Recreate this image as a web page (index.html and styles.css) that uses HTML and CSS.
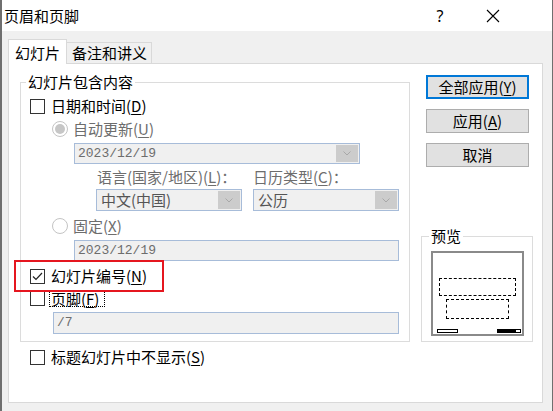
FILE: index.html
```html
<!DOCTYPE html>
<html lang="zh-CN">
<head>
<meta charset="UTF-8">
<title>页眉和页脚</title>
<link rel="stylesheet" href="styles.css">
</head>
<body>
<div class="window">
  <div class="titlebar">
    <span class="title">页眉和页脚</span>
    <span class="help">?</span>
    <span class="close">
      <svg width="14" height="14" viewBox="0 0 14 14"><path d="M1 1 L13 13 M13 1 L1 13" stroke="#000" stroke-width="1.1" fill="none"/></svg>
    </span>
  </div>
  <div class="body">
    <div class="tabs">
      <div class="tab active">幻灯片</div>
      <div class="tab">备注和讲义</div>
    </div>
    <div class="panel">
      <div class="main-col">
        <fieldset class="group">
          <legend>幻灯片包含内容</legend>
          <div class="row r1"><span class="check"></span><span>日期和时间(<u>D</u>)</span></div>
          <div class="row r2 off"><span class="radio on"></span><span>自动更新(<u>U</u>)</span></div>
          <div class="field combo date-combo"><span class="val">2023/12/19</span><span class="drop"><svg width="8" height="5" viewBox="0 0 8 5"><path d="M0.5 0.5 L4 4 L7.5 0.5" stroke="#a8a8a8" fill="none"/></svg></span></div>
          <div class="row labels off"><span class="lab1">语言(国家/地区)(<u>L</u>)：</span><span>日历类型(<u>C</u>)：</span></div>
          <div class="combos">
            <div class="field combo small"><span class="val cjk">中文(中国)</span><span class="drop"><svg width="8" height="5" viewBox="0 0 8 5"><path d="M0.5 0.5 L4 4 L7.5 0.5" stroke="#a8a8a8" fill="none"/></svg></span></div>
            <div class="field combo small"><span class="val cjk">公历</span><span class="drop"><svg width="8" height="5" viewBox="0 0 8 5"><path d="M0.5 0.5 L4 4 L7.5 0.5" stroke="#a8a8a8" fill="none"/></svg></span></div>
          </div>
          <div class="row r3 off"><span class="radio"></span><span>固定(<u>X</u>)</span></div>
          <div class="field date-fixed"><span class="val">2023/12/19</span></div>
          <div class="row r4 marked"><span class="check checked"><svg width="11" height="9" viewBox="0 0 11 9"><path d="M1 4.5 L4 7.5 L10 1" stroke="#222" stroke-width="1.2" fill="none"/></svg></span><span>幻灯片编号(<u>N</u>)</span></div>
          <div class="row r5"><span class="check"></span><span class="focus">页脚(<u>F</u>)</span></div>
          <div class="field footer-field"><span class="val">/7</span></div>
        </fieldset>
        <div class="row r6"><span class="check"></span><span>标题幻灯片中不显示(<u>S</u>)</span></div>
      </div>
      <div class="side-col">
        <button class="btn default">全部应用(<u>Y</u>)</button>
        <button class="btn">应用(<u>A</u>)</button>
        <button class="btn">取消</button>
        <fieldset class="preview-group">
          <legend>预览</legend>
          <div class="preview">
            <div class="dash d1"></div>
            <div class="dash d2"></div>
            <div class="bars"><span class="bar-l"></span><span class="bar-r"></span></div>
          </div>
        </fieldset>
      </div>
    </div>
  </div>
</div>
</body>
</html>
```

FILE: styles.css
```css
body {
  margin: 0;
  font-family: "Noto Sans CJK SC", sans-serif;
  font-size: 15px;
  line-height: 18px;
  color: #000;
  background: #f0f0f0;
}

.window {
  width: 553px;
  height: 411px;
  box-sizing: border-box;
  border-left: 2px solid #6f6f6f;
  border-right: 1px solid #6f6f6f;
  background: #f0f0f0;
  overflow: hidden;
}

.titlebar {
  height: 31px;
  background: #fff;
  display: flex;
  align-items: center;
  padding: 0 36px 0 2px;
}

.title {
  flex: 1;
  font-size: 15px;
  padding-top: 1px;
}

.help {
  width: 46px;
  text-align: center;
  font-family: "Noto Sans", sans-serif;
  font-size: 16px;
  margin-right: 7px;
}

.close {
  width: 46px;
  display: flex;
  justify-content: center;
}

.body {
  padding: 9px 9px 0 6px;
}

.tabs {
  display: flex;
  align-items: flex-end;
  height: 23px;
}

.tab {
  height: 20px;
  line-height: 20px;
  padding: 0 4px 0 5px;
  border: 1px solid #d9d9d9;
  border-left: none;
  border-bottom: none;
  background: #f0f0f0;
}

.tab.active {
  height: 24px;
  line-height: 26px;
  padding: 0 6px;
  border-left: 1px solid #d9d9d9;
  background: #fff;
  margin-bottom: -1px;
  position: relative;
  z-index: 1;
}

.panel {
  height: 340px;
  box-sizing: border-box;
  border: 1px solid #d9d9d9;
  background: #fff;
  display: flex;
}

.main-col {
  padding-left: 11px;
  width: 390px;
}

fieldset {
  margin: 0;
  min-width: 0;
  border: 1px solid #dcdcdc;
  box-sizing: border-box;
}

legend {
  padding: 0 2px;
  line-height: 18px;
}

.group {
  margin-top: 9px;
  width: 390px;
  padding: 0 0 7px 9px;
}

.group legend {
  margin-left: -4px;
}

.row {
  display: flex;
  align-items: center;
  height: 18px;
  white-space: nowrap;
}

.off {
  color: #6d6d6d;
}

u {
  text-decoration-thickness: 1px;
  text-underline-offset: 2px;
}

.check {
  width: 15px;
  height: 15px;
  box-sizing: border-box;
  border: 1px solid #333;
  background: #fff;
  margin-right: 6px;
  display: flex;
  align-items: center;
  justify-content: center;
}

.radio {
  width: 16px;
  height: 16px;
  box-sizing: border-box;
  border: 1px solid #c4c4c4;
  border-radius: 50%;
  background: #fff;
  margin-right: 5px;
  display: flex;
  align-items: center;
  justify-content: center;
}

.radio.on::before {
  content: "";
  width: 10px;
  height: 10px;
  border-radius: 50%;
  background: #c6c6c6;
}

.r1 { margin-top: 6px; }
.r2 { margin-top: 5px; margin-left: 22px; }
.r3 { margin-top: 6px; margin-left: 22px; }
.r4 { margin-top: 6px; position: relative; }
.r5 { margin-top: 4px; }
.r6 { margin-top: 6px; margin-left: 10px; }

.marked::after {
  content: "";
  position: absolute;
  left: -16px;
  top: -7px;
  width: 150px;
  height: 32px;
  box-sizing: border-box;
  border: 2px solid #e5161f;
}

.focus {
  outline: 1px dotted #000;
  outline-offset: 0;
  margin-left: -1px;
  padding: 0 5px 0 1px;
  line-height: 15px;
}

.field {
  box-sizing: border-box;
  border: 1px solid #a7bcd9;
  background: #f0f0f0;
  color: #6d6d6d;
  display: flex;
  align-items: center;
  font-family: "Liberation Mono", monospace;
  font-size: 13px;
}

.val {
  flex: 1;
  padding-left: 3px;
}

.val.cjk {
  font-family: "Noto Sans CJK SC", sans-serif;
  font-size: 15px;
  color: #555;
  padding-left: 4px;
}

.drop {
  width: 22px;
  align-self: stretch;
  margin: 1px;
  background: #cccccc;
  display: flex;
  align-items: center;
  justify-content: center;
}

.date-combo {
  margin: 5px 0 0 44px;
  width: 286px;
  height: 21px;
}

.labels {
  margin: 4px 0 0 67px;
}

.lab1 {
  width: 156px;
}

.combos {
  display: flex;
  gap: 11px;
  margin: 3px 0 0 66px;
}

.field.small {
  width: 146px;
  height: 22px;
}

.date-fixed {
  margin: 5px 0 0 44px;
  width: 325px;
  height: 21px;
}

.footer-field {
  margin: 5px 0 0 23px;
  width: 346px;
  height: 22px;
}

.side-col {
  margin-left: 11px;
  width: 112px;
  display: flex;
  flex-direction: column;
}

.btn {
  font-family: "Noto Sans CJK SC", sans-serif;
  font-size: 15px;
  line-height: 18px;
  color: #000;
  width: 103px;
  height: 24px;
  margin: 10px 0 0 5px;
  padding: 0;
  box-sizing: border-box;
  border: 1px solid #adadad;
  background: #e1e1e1;
}

.btn.default {
  margin-top: 11px;
  border: 2px solid #0078d7;
}

.preview-group {
  margin-top: 60px;
  width: 112px;
  padding: 0 0 5px 9px;
}

.preview-group legend {
  margin-left: -2px;
}

.preview {
  margin-top: 6px;
  width: 93px;
  height: 85px;
  box-sizing: border-box;
  border: 2px solid #8a8a8a;
  display: flex;
  flex-direction: column;
}

.dash {
  box-sizing: border-box;
  border: 1px dashed #000;
}

.d1 {
  margin: 25px 0 0 6px;
  width: 77px;
  height: 18px;
}

.d2 {
  margin: 3px 0 0 13px;
  width: 63px;
  height: 20px;
}

.bars {
  margin: auto 1px 1px 4px;
  display: flex;
  justify-content: space-between;
}

.bar-l,
.bar-r {
  height: 4px;
  box-sizing: border-box;
  border: 1px solid #000;
}

.bar-l {
  width: 21px;
  background: #fff;
}

.bar-r {
  width: 24px;
  background: linear-gradient(to right, #000 80%, #fff 80%);
}
```
